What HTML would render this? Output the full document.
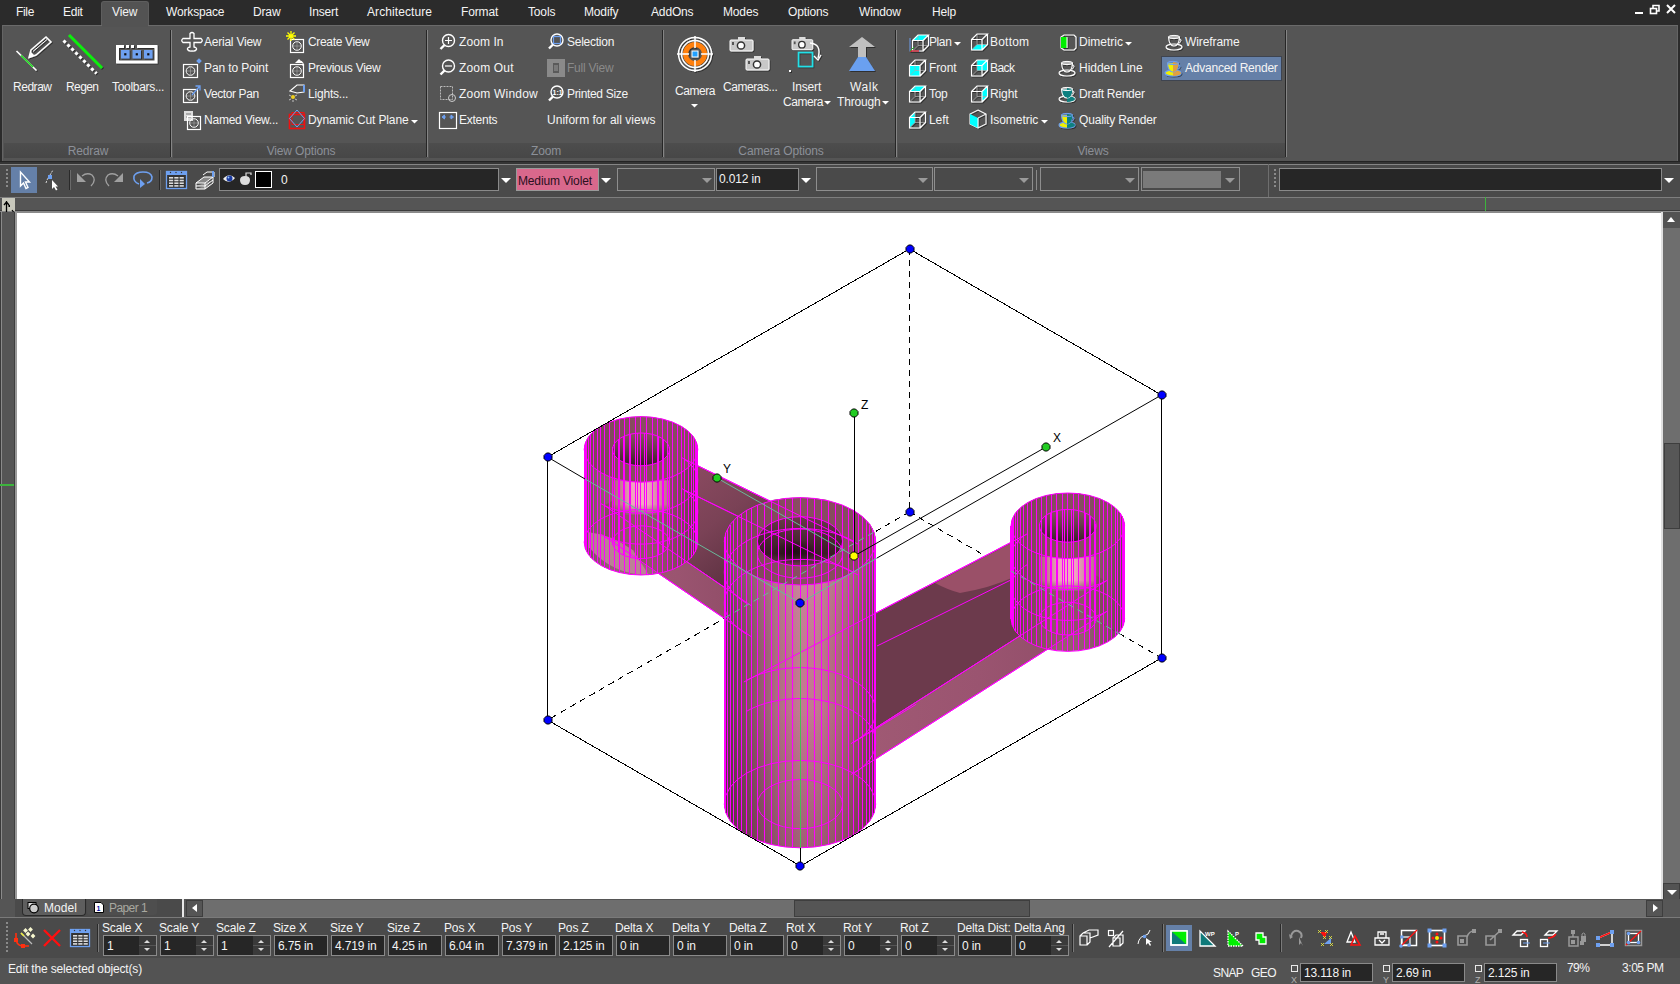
<!DOCTYPE html><html><head><meta charset="utf-8"><style>
*{margin:0;padding:0;box-sizing:border-box}
html,body{width:1680px;height:984px;overflow:hidden;background:#535353}
body{position:relative;font-family:"Liberation Sans",sans-serif;font-size:12px;color:#f4f4f4}
.t{position:absolute;white-space:nowrap;line-height:14px;letter-spacing:-0.15px}
.r{position:absolute}
svg{position:absolute;left:0;top:0}
</style></head><body><div class="r" style="left:0px;top:0px;width:1680px;height:25px;background:#2b2b2b;"></div>
<div class="r" style="left:101px;top:1px;width:48px;height:25px;background:#535353;border-radius:3px 3px 0 0;border:1px solid #5e5e5e;border-bottom:none"></div>
<div class="t" style="left:16px;top:5px;letter-spacing:-0.33px;">File</div>
<div class="t" style="left:63px;top:5px;letter-spacing:-0.24px;">Edit</div>
<div class="t" style="left:112px;top:5px;letter-spacing:-0.10px;">View</div>
<div class="t" style="left:166px;top:5px;letter-spacing:-0.16px;">Workspace</div>
<div class="t" style="left:253px;top:5px;">Draw</div>
<div class="t" style="left:309px;top:5px;letter-spacing:-0.15px;">Insert</div>
<div class="t" style="left:367px;top:5px;letter-spacing:0.08px;">Architecture</div>
<div class="t" style="left:461px;top:5px;">Format</div>
<div class="t" style="left:528px;top:5px;">Tools</div>
<div class="t" style="left:584px;top:5px;">Modify</div>
<div class="t" style="left:651px;top:5px;">AddOns</div>
<div class="t" style="left:723px;top:5px;">Modes</div>
<div class="t" style="left:788px;top:5px;">Options</div>
<div class="t" style="left:859px;top:5px;">Window</div>
<div class="t" style="left:932px;top:5px;">Help</div>
<svg width="1680" height="25" style="left:0;top:0"><g stroke="#fff" stroke-width="2" fill="none"><line x1="1635" y1="13" x2="1643" y2="13"/><rect x="1650.5" y="8.5" width="6" height="5" stroke-width="1.6"/><path d="M1653 8 V5.5 H1659 V11 H1657" stroke-width="1.6"/><path d="M1667 5 L1675 13 M1675 5 L1667 13" stroke-width="2"/></g></svg>
<div class="r" style="left:2px;top:25px;width:1676px;height:136px;background:#555555;border:1px solid #646464;border-top-color:#6a6a6a;border-bottom:none"></div>
<div class="r" style="left:102px;top:24px;width:46px;height:3px;background:#535353;"></div>
<div class="r" style="left:0px;top:25px;width:2px;height:137px;background:#2b2b2b;"></div>
<div class="r" style="left:1678px;top:25px;width:2px;height:137px;background:#2b2b2b;"></div>
<div class="r" style="left:4px;top:143px;width:166px;height:15px;background:linear-gradient(#4d4d4d,#474747);"></div>
<div class="r" style="left:173px;top:143px;width:253px;height:15px;background:linear-gradient(#4d4d4d,#474747);"></div>
<div class="r" style="left:429px;top:143px;width:233px;height:15px;background:linear-gradient(#4d4d4d,#474747);"></div>
<div class="r" style="left:665px;top:143px;width:230px;height:15px;background:linear-gradient(#4d4d4d,#474747);"></div>
<div class="r" style="left:898px;top:143px;width:387px;height:15px;background:linear-gradient(#4d4d4d,#474747);"></div>
<div class="r" style="left:170px;top:30px;width:1px;height:127px;background:#262626;"></div>
<div class="r" style="left:171px;top:30px;width:1px;height:127px;background:#858585;"></div>
<div class="r" style="left:426px;top:30px;width:1px;height:127px;background:#262626;"></div>
<div class="r" style="left:427px;top:30px;width:1px;height:127px;background:#858585;"></div>
<div class="r" style="left:662px;top:30px;width:1px;height:127px;background:#262626;"></div>
<div class="r" style="left:663px;top:30px;width:1px;height:127px;background:#858585;"></div>
<div class="r" style="left:895px;top:30px;width:1px;height:127px;background:#262626;"></div>
<div class="r" style="left:896px;top:30px;width:1px;height:127px;background:#858585;"></div>
<div class="r" style="left:1285px;top:30px;width:1px;height:127px;background:#262626;"></div>
<div class="r" style="left:1286px;top:30px;width:1px;height:127px;background:#858585;"></div>
<div class="t" style="left:-12px;width:200px;text-align:center;top:144px;color:#8c9098">Redraw</div>
<div class="t" style="left:201px;width:200px;text-align:center;top:144px;color:#8c9098">View Options</div>
<div class="t" style="left:446px;width:200px;text-align:center;top:144px;color:#8c9098">Zoom</div>
<div class="t" style="left:681px;width:200px;text-align:center;top:144px;color:#8c9098">Camera Options</div>
<div class="t" style="left:993px;width:200px;text-align:center;top:144px;color:#8c9098">Views</div>
<div class="r" style="left:1161px;top:56px;width:121px;height:25px;background:#6580a8;border:1px solid #3e4450"></div>
<div class="t" style="left:13px;top:80px;letter-spacing:-0.47px;">Redraw</div>
<div class="t" style="left:66px;top:80px;letter-spacing:-0.60px;">Regen</div>
<div class="t" style="left:112px;top:80px;letter-spacing:-0.30px;">Toolbars...</div>
<div class="t" style="left:204px;top:35px;letter-spacing:-0.23px;">Aerial View</div>
<div class="t" style="left:204px;top:61px;letter-spacing:-0.10px;">Pan to Point</div>
<div class="t" style="left:204px;top:87px;letter-spacing:-0.40px;">Vector Pan</div>
<div class="t" style="left:204px;top:113px;letter-spacing:-0.23px;">Named View...</div>
<div class="t" style="left:308px;top:35px;letter-spacing:-0.34px;">Create View</div>
<div class="t" style="left:308px;top:61px;letter-spacing:-0.26px;">Previous View</div>
<div class="t" style="left:308px;top:87px;letter-spacing:-0.20px;">Lights...</div>
<div class="t" style="left:308px;top:113px;letter-spacing:-0.13px;">Dynamic Cut Plane</div>
<div class="t" style="left:459px;top:35px;letter-spacing:0.08px;">Zoom In</div>
<div class="t" style="left:459px;top:61px;letter-spacing:0.16px;">Zoom Out</div>
<div class="t" style="left:459px;top:87px;letter-spacing:0.20px;">Zoom Window</div>
<div class="t" style="left:459px;top:113px;letter-spacing:-0.25px;">Extents</div>
<div class="t" style="left:567px;top:35px;letter-spacing:-0.25px;">Selection</div>
<div class="t" style="left:567px;top:87px;letter-spacing:-0.33px;">Printed Size</div>
<div class="t" style="left:547px;top:113px;letter-spacing:0.02px;">Uniform for all views</div>
<div class="t" style="left:675px;top:84px;letter-spacing:-0.45px;">Camera</div>
<div class="t" style="left:723px;top:80px;letter-spacing:-0.44px;">Cameras...</div>
<div class="t" style="left:792px;top:80px;letter-spacing:-0.15px;">Insert</div>
<div class="t" style="left:783px;top:95px;letter-spacing:-0.45px;">Camera</div>
<div class="t" style="left:850px;top:80px;letter-spacing:0.60px;">Walk</div>
<div class="t" style="left:837px;top:95px;letter-spacing:-0.16px;">Through</div>
<div class="t" style="left:929px;top:35px;letter-spacing:-0.40px;">Plan</div>
<div class="t" style="left:929px;top:61px;letter-spacing:-0.12px;">Front</div>
<div class="t" style="left:929px;top:87px;letter-spacing:-0.32px;">Top</div>
<div class="t" style="left:929px;top:113px;letter-spacing:-0.10px;">Left</div>
<div class="t" style="left:990px;top:35px;letter-spacing:0.21px;">Bottom</div>
<div class="t" style="left:990px;top:61px;letter-spacing:-0.57px;">Back</div>
<div class="t" style="left:990px;top:87px;letter-spacing:-0.12px;">Right</div>
<div class="t" style="left:990px;top:113px;letter-spacing:-0.05px;">Isometric</div>
<div class="t" style="left:1079px;top:35px;letter-spacing:0.00px;">Dimetric</div>
<div class="t" style="left:1079px;top:61px;letter-spacing:-0.04px;">Hidden Line</div>
<div class="t" style="left:1079px;top:87px;letter-spacing:-0.25px;">Draft Render</div>
<div class="t" style="left:1079px;top:113px;letter-spacing:-0.18px;">Quality Render</div>
<div class="t" style="left:1185px;top:35px;letter-spacing:-0.09px;">Wireframe</div>
<div class="t" style="left:567px;top:61px;letter-spacing:-0.23px;color:#8a8a8a;">Full View</div>
<div class="t" style="left:1185px;top:61px;letter-spacing:-0.23px;">Advanced Render</div>
<div class="r" style="left:0px;top:161px;width:1680px;height:1px;background:#242424;"></div>
<div class="r" style="left:0px;top:162px;width:1680px;height:2px;background:#353535;"></div>
<div class="r" style="left:0px;top:164px;width:1680px;height:1px;background:#858585;"></div>
<div class="r" style="left:0px;top:165px;width:1680px;height:32px;background:#4a4a4a;"></div>
<div class="r" style="left:0px;top:197px;width:1680px;height:1px;background:#7e7e7e;"></div>
<div class="r" style="left:0px;top:198px;width:1680px;height:12px;background:#555555;"></div>
<div class="r" style="left:0px;top:210px;width:1680px;height:1px;background:#3c3c3c;"></div>
<div class="r" style="left:0px;top:211px;width:1680px;height:2px;background:#8a8a8a;"></div>
<div class="r" style="left:6px;top:169px;width:2px;height:2px;background:#8a8a8a;"></div>
<div class="r" style="left:6px;top:173px;width:2px;height:2px;background:#8a8a8a;"></div>
<div class="r" style="left:6px;top:177px;width:2px;height:2px;background:#8a8a8a;"></div>
<div class="r" style="left:6px;top:181px;width:2px;height:2px;background:#8a8a8a;"></div>
<div class="r" style="left:6px;top:185px;width:2px;height:2px;background:#8a8a8a;"></div>
<div class="r" style="left:11px;top:167px;width:26px;height:26px;background:#6580a8;"></div>
<div class="r" style="left:69px;top:170px;width:1px;height:20px;background:#7a7a7a;"></div>
<div class="r" style="left:159px;top:170px;width:1px;height:20px;background:#7a7a7a;"></div>
<div class="r" style="left:219px;top:168px;width:280px;height:23px;background:#262626;border:1px solid #8a8a8a"></div>
<div class="r" style="left:255px;top:171px;width:17px;height:17px;background:#000;border:1.5px solid #fff"></div>
<div class="t" style="left:281px;top:173px;">0</div>
<div class="r" style="left:501px;top:178px;width:0;height:0;border-left:5px solid transparent;border-right:5px solid transparent;border-top:5px solid #fff"></div>
<div class="r" style="left:516px;top:168px;width:83px;height:23px;background:#d9688c;border:1px solid #9a9a9a"></div>
<div class="t" style="left:518px;top:174px;color:#2a1020;">Medium Violet</div>
<div class="r" style="left:601px;top:178px;width:0;height:0;border-left:5px solid transparent;border-right:5px solid transparent;border-top:5px solid #fff"></div>
<div class="r" style="left:617px;top:168px;width:98px;height:23px;background:#4a4a4a;border:1px solid #8e8e8e"></div>
<div class="r" style="left:702px;top:178px;width:0;height:0;border-left:5px solid transparent;border-right:5px solid transparent;border-top:5px solid #9a9a9a"></div>
<div class="r" style="left:716px;top:168px;width:83px;height:23px;background:#262626;border:1px solid #8a8a8a"></div>
<div class="t" style="left:719px;top:172px;">0.012 in</div>
<div class="r" style="left:801px;top:178px;width:0;height:0;border-left:5px solid transparent;border-right:5px solid transparent;border-top:5px solid #fff"></div>
<div class="r" style="left:816px;top:167px;width:117px;height:24px;background:#4a4a4a;border:1px solid #8e8e8e"></div>
<div class="r" style="left:918px;top:178px;width:0;height:0;border-left:5px solid transparent;border-right:5px solid transparent;border-top:5px solid #9a9a9a"></div>
<div class="r" style="left:934px;top:167px;width:99px;height:24px;background:#4a4a4a;border:1px solid #8e8e8e"></div>
<div class="r" style="left:1019px;top:178px;width:0;height:0;border-left:5px solid transparent;border-right:5px solid transparent;border-top:5px solid #9a9a9a"></div>
<div class="r" style="left:1036px;top:170px;width:1px;height:20px;background:#8a8a8a;"></div>
<div class="r" style="left:1040px;top:167px;width:99px;height:24px;background:#4a4a4a;border:1px solid #8e8e8e"></div>
<div class="r" style="left:1125px;top:178px;width:0;height:0;border-left:5px solid transparent;border-right:5px solid transparent;border-top:5px solid #9a9a9a"></div>
<div class="r" style="left:1141px;top:167px;width:99px;height:24px;background:#4a4a4a;border:1px solid #8e8e8e"></div>
<div class="r" style="left:1143px;top:171px;width:78px;height:17px;background:#7a7a7a;"></div>
<div class="r" style="left:1225px;top:178px;width:0;height:0;border-left:5px solid transparent;border-right:5px solid transparent;border-top:5px solid #9a9a9a"></div>
<div class="r" style="left:1268px;top:164px;width:1px;height:33px;background:#6e6e6e;"></div>
<div class="r" style="left:1274px;top:169px;width:2px;height:2px;background:#8a8a8a;"></div>
<div class="r" style="left:1274px;top:173px;width:2px;height:2px;background:#8a8a8a;"></div>
<div class="r" style="left:1274px;top:177px;width:2px;height:2px;background:#8a8a8a;"></div>
<div class="r" style="left:1274px;top:181px;width:2px;height:2px;background:#8a8a8a;"></div>
<div class="r" style="left:1274px;top:185px;width:2px;height:2px;background:#8a8a8a;"></div>
<div class="r" style="left:1279px;top:168px;width:383px;height:23px;background:#262626;border:1px solid #8a8a8a"></div>
<div class="r" style="left:1664px;top:178px;width:0;height:0;border-left:5px solid transparent;border-right:5px solid transparent;border-top:5px solid #fff"></div>
<div class="r" style="left:2px;top:198px;width:13px;height:13px;background:#c8c8bc;"></div>
<svg width="20" height="20" style="left:0;top:196px"><path d="M6.5,5 V17 M4,9 L6.5,6 L9,9" stroke="#000" stroke-width="1.3" fill="none"/><rect x="8.5" y="9" width="1.5" height="2" fill="#000"/><path d="M12,14 L13.5,16" stroke="#000" stroke-width="1.2"/></svg>
<div class="r" style="left:1485px;top:197px;width:1px;height:14px;background:#3cb43c;"></div>
<div class="r" style="left:0px;top:212px;width:16px;height:687px;background:#555555;"></div>
<div class="r" style="left:0px;top:212px;width:1px;height:687px;background:#3a3a3a;"></div>
<div class="r" style="left:1px;top:212px;width:1px;height:687px;background:#8a8a8a;"></div>
<div class="r" style="left:14px;top:212px;width:1px;height:687px;background:#3e3e3e;"></div>
<div class="r" style="left:15px;top:212px;width:2px;height:687px;background:#999;"></div>
<div class="r" style="left:0px;top:484px;width:14px;height:2px;background:#3cb43c;"></div>
<div class="r" style="left:17px;top:213px;width:1645px;height:686px;background:#ffffff;"></div>
<div class="r" style="left:1661px;top:212px;width:2px;height:688px;background:#e0e0e0;"></div>
<div class="r" style="left:1663px;top:212px;width:17px;height:672px;background:#6e6e6e;"></div>
<div class="r" style="left:1663px;top:212px;width:17px;height:16px;background:#535353;"></div>
<div class="r" style="left:1667px;top:217px;width:0;height:0;border-left:4.5px solid transparent;border-right:4.5px solid transparent;border-bottom:5px solid #fff"></div>
<div class="r" style="left:1664px;top:443px;width:16px;height:86px;background:#575757;border:1px solid #3e3e3e"></div>
<div class="r" style="left:1663px;top:883px;width:17px;height:17px;background:#535353;border:1px solid #3e3e3e"></div>
<div class="r" style="left:1667px;top:890px;width:0;height:0;border-left:5px solid transparent;border-right:5px solid transparent;border-top:5px solid #fff"></div>
<div class="r" style="left:0px;top:899px;width:1680px;height:18px;background:#555555;"></div>
<div class="r" style="left:15px;top:899px;width:167px;height:18px;background:#4a4a4a;"></div>
<div class="r" style="left:22px;top:899px;width:64px;height:17px;background:#5e5e5e;border-radius:0 0 4px 4px;border:1px solid #2a2a2a;border-top:none"></div>
<div class="t" style="left:44px;top:901px;letter-spacing:0.06px;">Model</div>
<div class="r" style="left:87px;top:899px;width:70px;height:16px;background:#4e4e4e;border-radius:0 0 3px 3px"></div>
<div class="t" style="left:109px;top:901px;letter-spacing:-0.58px;color:#a8a8a0;">Paper 1</div>
<svg width="120" height="20" style="left:0;top:898px"><rect x="28" y="4.5" width="8" height="6" fill="#ddd" stroke="#000" stroke-width="1"/><circle cx="34" cy="10.5" r="4.3" fill="#ccc" stroke="#000" stroke-width="1.2"/><path d="M94.5,4.5 H101 L103.5,7 V14.5 H94.5 Z" fill="#fff" stroke="#000" stroke-width="1"/><text x="96.5" y="13" font-family="Liberation Sans" font-size="7" font-weight="bold" fill="#0010a0">1</text></svg>
<div class="r" style="left:182px;top:899px;width:2px;height:18px;background:#e8e8e8;"></div>
<div class="r" style="left:186px;top:900px;width:17px;height:17px;background:#555;border:1px solid #3e3e3e"></div>
<div class="r" style="left:192px;top:904px;width:0;height:0;border-top:4.5px solid transparent;border-bottom:4.5px solid transparent;border-right:5px solid #fff"></div>
<div class="r" style="left:203px;top:900px;width:1443px;height:17px;background:#6e6e6e;"></div>
<div class="r" style="left:794px;top:900px;width:236px;height:17px;background:#555555;border:1px solid #3e3e3e"></div>
<div class="r" style="left:1646px;top:900px;width:17px;height:17px;background:#555;border:1px solid #3e3e3e"></div>
<div class="r" style="left:1653px;top:904px;width:0;height:0;border-top:4.5px solid transparent;border-bottom:4.5px solid transparent;border-left:5px solid #fff"></div>
<div class="r" style="left:1663px;top:900px;width:17px;height:17px;background:#575757;"></div>
<div class="r" style="left:0px;top:917px;width:1680px;height:1px;background:#7a7a7a;"></div>
<div class="r" style="left:0px;top:918px;width:1680px;height:40px;background:#4a4a4a;"></div>
<div class="r" style="left:6px;top:922px;width:2px;height:2px;background:#8a8a8a;"></div>
<div class="r" style="left:6px;top:926px;width:2px;height:2px;background:#8a8a8a;"></div>
<div class="r" style="left:6px;top:930px;width:2px;height:2px;background:#8a8a8a;"></div>
<div class="r" style="left:6px;top:934px;width:2px;height:2px;background:#8a8a8a;"></div>
<div class="r" style="left:6px;top:938px;width:2px;height:2px;background:#8a8a8a;"></div>
<div class="r" style="left:6px;top:942px;width:2px;height:2px;background:#8a8a8a;"></div>
<div class="r" style="left:6px;top:946px;width:2px;height:2px;background:#8a8a8a;"></div>
<div class="r" style="left:6px;top:950px;width:2px;height:2px;background:#8a8a8a;"></div>
<div class="r" style="left:97px;top:925px;width:1px;height:27px;background:#7a7a7a;"></div>
<div class="t" style="left:102px;top:921px;width:56px;overflow:hidden">Scale X</div>
<div class="r" style="left:103px;top:935px;width:54px;height:21px;background:#262626;border:1px solid #8a8a8a"></div>
<div class="t" style="left:107px;top:939px;">1</div>
<div class="r" style="left:139px;top:936px;width:17px;height:19px;background:#3a3a3a;"></div>
<div class="r" style="left:139px;top:945px;width:17px;height:1px;background:#555;"></div>
<div class="r" style="left:144px;top:940px;width:0;height:0;border-left:3px solid transparent;border-right:3px solid transparent;border-bottom:3px solid #ddd"></div>
<div class="r" style="left:144px;top:948px;width:0;height:0;border-left:3px solid transparent;border-right:3px solid transparent;border-top:3px solid #ddd"></div>
<div class="t" style="left:159px;top:921px;width:56px;overflow:hidden">Scale Y</div>
<div class="r" style="left:160px;top:935px;width:54px;height:21px;background:#262626;border:1px solid #8a8a8a"></div>
<div class="t" style="left:164px;top:939px;">1</div>
<div class="r" style="left:196px;top:936px;width:17px;height:19px;background:#3a3a3a;"></div>
<div class="r" style="left:196px;top:945px;width:17px;height:1px;background:#555;"></div>
<div class="r" style="left:201px;top:940px;width:0;height:0;border-left:3px solid transparent;border-right:3px solid transparent;border-bottom:3px solid #ddd"></div>
<div class="r" style="left:201px;top:948px;width:0;height:0;border-left:3px solid transparent;border-right:3px solid transparent;border-top:3px solid #ddd"></div>
<div class="t" style="left:216px;top:921px;width:56px;overflow:hidden">Scale Z</div>
<div class="r" style="left:217px;top:935px;width:54px;height:21px;background:#262626;border:1px solid #8a8a8a"></div>
<div class="t" style="left:221px;top:939px;">1</div>
<div class="r" style="left:253px;top:936px;width:17px;height:19px;background:#3a3a3a;"></div>
<div class="r" style="left:253px;top:945px;width:17px;height:1px;background:#555;"></div>
<div class="r" style="left:258px;top:940px;width:0;height:0;border-left:3px solid transparent;border-right:3px solid transparent;border-bottom:3px solid #ddd"></div>
<div class="r" style="left:258px;top:948px;width:0;height:0;border-left:3px solid transparent;border-right:3px solid transparent;border-top:3px solid #ddd"></div>
<div class="t" style="left:273px;top:921px;width:56px;overflow:hidden">Size X</div>
<div class="r" style="left:274px;top:935px;width:54px;height:21px;background:#262626;border:1px solid #8a8a8a"></div>
<div class="t" style="left:278px;top:939px;">6.75 in</div>
<div class="t" style="left:330px;top:921px;width:56px;overflow:hidden">Size Y</div>
<div class="r" style="left:331px;top:935px;width:54px;height:21px;background:#262626;border:1px solid #8a8a8a"></div>
<div class="t" style="left:335px;top:939px;">4.719 in</div>
<div class="t" style="left:387px;top:921px;width:56px;overflow:hidden">Size Z</div>
<div class="r" style="left:388px;top:935px;width:54px;height:21px;background:#262626;border:1px solid #8a8a8a"></div>
<div class="t" style="left:392px;top:939px;">4.25 in</div>
<div class="t" style="left:444px;top:921px;width:56px;overflow:hidden">Pos X</div>
<div class="r" style="left:445px;top:935px;width:54px;height:21px;background:#262626;border:1px solid #8a8a8a"></div>
<div class="t" style="left:449px;top:939px;">6.04 in</div>
<div class="t" style="left:501px;top:921px;width:56px;overflow:hidden">Pos Y</div>
<div class="r" style="left:502px;top:935px;width:54px;height:21px;background:#262626;border:1px solid #8a8a8a"></div>
<div class="t" style="left:506px;top:939px;">7.379 in</div>
<div class="t" style="left:558px;top:921px;width:56px;overflow:hidden">Pos Z</div>
<div class="r" style="left:559px;top:935px;width:54px;height:21px;background:#262626;border:1px solid #8a8a8a"></div>
<div class="t" style="left:563px;top:939px;">2.125 in</div>
<div class="t" style="left:615px;top:921px;width:56px;overflow:hidden">Delta X</div>
<div class="r" style="left:616px;top:935px;width:54px;height:21px;background:#262626;border:1px solid #8a8a8a"></div>
<div class="t" style="left:620px;top:939px;">0 in</div>
<div class="t" style="left:672px;top:921px;width:56px;overflow:hidden">Delta Y</div>
<div class="r" style="left:673px;top:935px;width:54px;height:21px;background:#262626;border:1px solid #8a8a8a"></div>
<div class="t" style="left:677px;top:939px;">0 in</div>
<div class="t" style="left:729px;top:921px;width:56px;overflow:hidden">Delta Z</div>
<div class="r" style="left:730px;top:935px;width:54px;height:21px;background:#262626;border:1px solid #8a8a8a"></div>
<div class="t" style="left:734px;top:939px;">0 in</div>
<div class="t" style="left:786px;top:921px;width:56px;overflow:hidden">Rot X</div>
<div class="r" style="left:787px;top:935px;width:54px;height:21px;background:#262626;border:1px solid #8a8a8a"></div>
<div class="t" style="left:791px;top:939px;">0</div>
<div class="r" style="left:823px;top:936px;width:17px;height:19px;background:#3a3a3a;"></div>
<div class="r" style="left:823px;top:945px;width:17px;height:1px;background:#555;"></div>
<div class="r" style="left:828px;top:940px;width:0;height:0;border-left:3px solid transparent;border-right:3px solid transparent;border-bottom:3px solid #ddd"></div>
<div class="r" style="left:828px;top:948px;width:0;height:0;border-left:3px solid transparent;border-right:3px solid transparent;border-top:3px solid #ddd"></div>
<div class="t" style="left:843px;top:921px;width:56px;overflow:hidden">Rot Y</div>
<div class="r" style="left:844px;top:935px;width:54px;height:21px;background:#262626;border:1px solid #8a8a8a"></div>
<div class="t" style="left:848px;top:939px;">0</div>
<div class="r" style="left:880px;top:936px;width:17px;height:19px;background:#3a3a3a;"></div>
<div class="r" style="left:880px;top:945px;width:17px;height:1px;background:#555;"></div>
<div class="r" style="left:885px;top:940px;width:0;height:0;border-left:3px solid transparent;border-right:3px solid transparent;border-bottom:3px solid #ddd"></div>
<div class="r" style="left:885px;top:948px;width:0;height:0;border-left:3px solid transparent;border-right:3px solid transparent;border-top:3px solid #ddd"></div>
<div class="t" style="left:900px;top:921px;width:56px;overflow:hidden">Rot Z</div>
<div class="r" style="left:901px;top:935px;width:54px;height:21px;background:#262626;border:1px solid #8a8a8a"></div>
<div class="t" style="left:905px;top:939px;">0</div>
<div class="r" style="left:937px;top:936px;width:17px;height:19px;background:#3a3a3a;"></div>
<div class="r" style="left:937px;top:945px;width:17px;height:1px;background:#555;"></div>
<div class="r" style="left:942px;top:940px;width:0;height:0;border-left:3px solid transparent;border-right:3px solid transparent;border-bottom:3px solid #ddd"></div>
<div class="r" style="left:942px;top:948px;width:0;height:0;border-left:3px solid transparent;border-right:3px solid transparent;border-top:3px solid #ddd"></div>
<div class="t" style="left:957px;top:921px;width:56px;overflow:hidden">Delta Dist:</div>
<div class="r" style="left:958px;top:935px;width:54px;height:21px;background:#262626;border:1px solid #8a8a8a"></div>
<div class="t" style="left:962px;top:939px;">0 in</div>
<div class="t" style="left:1014px;top:921px;width:56px;overflow:hidden">Delta Ang</div>
<div class="r" style="left:1015px;top:935px;width:54px;height:21px;background:#262626;border:1px solid #8a8a8a"></div>
<div class="t" style="left:1019px;top:939px;">0</div>
<div class="r" style="left:1051px;top:936px;width:17px;height:19px;background:#3a3a3a;"></div>
<div class="r" style="left:1051px;top:945px;width:17px;height:1px;background:#555;"></div>
<div class="r" style="left:1056px;top:940px;width:0;height:0;border-left:3px solid transparent;border-right:3px solid transparent;border-bottom:3px solid #ddd"></div>
<div class="r" style="left:1056px;top:948px;width:0;height:0;border-left:3px solid transparent;border-right:3px solid transparent;border-top:3px solid #ddd"></div>
<div class="r" style="left:1072px;top:925px;width:1px;height:27px;background:#7a7a7a;"></div>
<div class="r" style="left:1162px;top:925px;width:1px;height:27px;background:#7a7a7a;"></div>
<div class="r" style="left:1166px;top:925px;width:26px;height:26px;background:#6580a8;"></div>
<div class="r" style="left:1280px;top:925px;width:1px;height:27px;background:#7a7a7a;"></div>
<div class="r" style="left:0px;top:958px;width:1680px;height:26px;background:#535353;"></div>
<div class="t" style="left:8px;top:962px;letter-spacing:-0.15px;">Edit the selected object(s)</div>
<div class="t" style="left:1213px;top:966px;letter-spacing:-0.60px;">SNAP</div>
<div class="t" style="left:1251px;top:966px;letter-spacing:-0.60px;">GEO</div>
<div class="r" style="left:1291px;top:965px;width:7px;height:7px;background:none;border:1.5px solid #e8e8e8"></div>
<div class="t" style="left:1291px;top:973px;color:#b0b0b0;font-size:9px;">X</div>
<div class="r" style="left:1300px;top:963px;width:73px;height:19px;background:#262626;border:1px solid #8a8a8a"></div>
<div class="t" style="left:1304px;top:966px;">13.118 in</div>
<div class="r" style="left:1383px;top:965px;width:7px;height:7px;background:none;border:1.5px solid #e8e8e8"></div>
<div class="t" style="left:1383px;top:973px;color:#b0b0b0;font-size:9px;">Y</div>
<div class="r" style="left:1392px;top:963px;width:73px;height:19px;background:#262626;border:1px solid #8a8a8a"></div>
<div class="t" style="left:1396px;top:966px;">2.69 in</div>
<div class="r" style="left:1475px;top:965px;width:7px;height:7px;background:none;border:1.5px solid #e8e8e8"></div>
<div class="t" style="left:1475px;top:973px;color:#b0b0b0;font-size:9px;">Z</div>
<div class="r" style="left:1484px;top:963px;width:73px;height:19px;background:#262626;border:1px solid #8a8a8a"></div>
<div class="t" style="left:1488px;top:966px;">2.125 in</div>
<div class="t" style="left:1567px;top:961px;letter-spacing:-0.60px;">79%</div>
<div class="t" style="left:1622px;top:961px;letter-spacing:-0.44px;">3:05 PM</div><svg width="1680" height="984" style="left:0;top:0">
<defs>
<linearGradient id="gc" x1="0" x2="1" y1="0" y2="0">
 <stop offset="0" stop-color="#5a3c44"/><stop offset="0.08" stop-color="#704654"/><stop offset="0.2" stop-color="#8c5468"/>
 <stop offset="0.36" stop-color="#b06e84"/><stop offset="0.5" stop-color="#c47a92"/><stop offset="0.62" stop-color="#c27890"/>
 <stop offset="0.8" stop-color="#a86078"/><stop offset="0.92" stop-color="#844c5c"/><stop offset="1" stop-color="#5e3c46"/>
</linearGradient>
<linearGradient id="gctop" x1="0" x2="0" y1="0" y2="1">
 <stop offset="0" stop-color="#ffffff" stop-opacity="0.2"/><stop offset="0.3" stop-color="#ffffff" stop-opacity="0.05"/><stop offset="0.45" stop-color="#ffffff" stop-opacity="0"/>
 <stop offset="0.6" stop-color="#200010" stop-opacity="0"/><stop offset="1" stop-color="#200010" stop-opacity="0.22"/>
</linearGradient>
<linearGradient id="gb" x1="0" x2="1" y1="0" y2="0">
 <stop offset="0" stop-color="#5e4040"/><stop offset="0.12" stop-color="#7a4a58"/><stop offset="0.4" stop-color="#925668"/>
 <stop offset="0.65" stop-color="#8e5268"/><stop offset="0.88" stop-color="#7a4458"/><stop offset="1" stop-color="#5e3a44"/>
</linearGradient>
<linearGradient id="gpink" x1="0" x2="1" y1="0" y2="0">
 <stop offset="0" stop-color="#a86078"/><stop offset="0.35" stop-color="#f0a2c0"/><stop offset="0.6" stop-color="#f4a8c4"/><stop offset="1" stop-color="#b86a88"/>
</linearGradient>
<linearGradient id="gpinkv" x1="0" x2="0" y1="0" y2="1">
 <stop offset="0" stop-color="#000" stop-opacity="0"/><stop offset="0.7" stop-color="#000" stop-opacity="0"/><stop offset="1" stop-color="#000" stop-opacity="0.35"/>
</linearGradient>
<linearGradient id="ghole" x1="0" x2="0" y1="0" y2="1">
 <stop offset="0" stop-color="#6a3a4a"/><stop offset="0.4" stop-color="#4e2a36"/><stop offset="0.75" stop-color="#3a1c26"/><stop offset="1" stop-color="#6a3a4c"/>
</linearGradient>
<linearGradient id="gholeb" x1="0" x2="0" y1="0" y2="1">
 <stop offset="0" stop-color="#8a5062"/><stop offset="0.45" stop-color="#6a3c4c"/><stop offset="1" stop-color="#3a1c28"/>
</linearGradient>
<radialGradient id="gwedge" cx="0.5" cy="0.5" r="0.5">
 <stop offset="0" stop-color="#1a0a10" stop-opacity="0.85"/><stop offset="1" stop-color="#1a0a10" stop-opacity="0"/>
</radialGradient>
<linearGradient id="gtop" x1="0" x2="1" y1="0" y2="0">
 <stop offset="0" stop-color="#7a4656"/><stop offset="0.5" stop-color="#8a4c62"/><stop offset="1" stop-color="#844a5e"/>
</linearGradient>
<linearGradient id="glarm" gradientUnits="userSpaceOnUse" x1="690" y1="470" x2="760" y2="560">
 <stop offset="0" stop-color="#8a4a60"/><stop offset="0.5" stop-color="#7a4256"/><stop offset="1" stop-color="#5e3242"/>
</linearGradient>
<linearGradient id="garmf" x1="0" x2="1" y1="0" y2="0">
 <stop offset="0" stop-color="#a05a74"/><stop offset="0.5" stop-color="#9a5470"/><stop offset="1" stop-color="#8e4c66"/>
</linearGradient>
</defs>
<g stroke="#000" stroke-width="1" stroke-dasharray="6,5" fill="none" shape-rendering="crispEdges"><line x1="909.5" y1="249.0" x2="909.5" y2="512.0" stroke="#000" stroke-width="1" /><line x1="909.5" y1="512.0" x2="547.5" y2="720.0" stroke="#000" stroke-width="1" /><line x1="909.5" y1="512.0" x2="1161.5" y2="658.0" stroke="#000" stroke-width="1" /></g>
<polygon points="743.8,682.0 1025.7,534.7 1105.9,581.0 850.8,743.8" fill="#6c3a4c" />
<polygon points="850.8,743.8 1105.9,581.0 1105.9,612.0 850.8,774.7" fill="url(#garmf)" />
<path d="M935,583 L1011,543 L1014,577 Q990,588 960,593 Q948,590 935,583 Z" fill="#9a5068"/>
<line x1="743.8" y1="682.0" x2="1025.7" y2="534.7" stroke="#ff00ff" stroke-width="1" />
<line x1="850.8" y1="743.8" x2="1105.9" y2="581.0" stroke="#ff00ff" stroke-width="1" />
<line x1="850.8" y1="774.7" x2="1105.9" y2="612.0" stroke="#ff00ff" stroke-width="1" />
<line x1="877.0" y1="646.0" x2="1021.0" y2="575.0" stroke="#ff00ff" stroke-width="1" />
<path d="M1011.0,525.8 L1011.0,618.6 A56.8,32.8 0 0 0 1124.6,618.6 L1124.6,525.8 A56.8,32.8 0 0 0 1011.0,525.8 Z" fill="url(#gb)" opacity="0.95"/>
<rect x="1039.4" y="556.6" width="56.8" height="34" fill="url(#gpink)"/>
<rect x="1039.4" y="556.6" width="56.8" height="34" fill="url(#gpinkv)"/>
<ellipse cx="1067.8" cy="525.8" rx="56.8" ry="32.8" fill="url(#gtop)" />
<ellipse cx="1067.8" cy="525.8" rx="28.4" ry="16.4" fill="url(#gholeb)" />
<path d="M1124.5,525.8V618.6M1124.5,522.6V621.8M1123.5,519.4V625.0M1122.5,516.3V628.1M1120.5,513.2V631.1M1117.5,510.3V634.0M1115.5,507.6V636.8M1111.5,505.0V639.4M1107.5,502.6V641.8M1103.5,500.4V643.9M1099.5,498.5V645.8M1094.5,496.9V647.5M1089.5,495.5V648.9M1084.5,494.4V650.0M1078.5,493.6V650.7M1073.5,493.1V651.2M1067.5,493.0V651.4M1062.5,493.1V651.2M1056.5,493.6V650.7M1051.5,494.4V650.0M1046.5,495.5V648.9M1041.5,496.9V647.5M1036.5,498.5V645.8M1031.5,500.4V643.9M1027.5,502.6V641.8M1023.5,505.0V639.4M1020.5,507.6V636.8M1017.5,510.3V634.0M1015.5,513.2V631.1M1013.5,516.3V628.1M1012.5,519.4V625.0M1011.5,522.6V621.8M1010.5,525.8V618.6" stroke="#ff00ff" stroke-width="1" fill="none" shape-rendering="crispEdges"/>
<path d="M1095.5,523.8V620.6M1094.5,519.6V624.7M1090.5,515.9V628.4M1085.5,512.9V631.5M1078.5,510.7V633.7M1071.5,509.5V634.8M1064.5,509.5V634.8M1057.5,510.6V633.8M1050.5,512.7V631.7M1045.5,515.7V628.7M1041.5,519.4V625.0M1039.5,523.5V620.8" stroke="#ff00ff" stroke-width="1" fill="none" shape-rendering="crispEdges"/>
<ellipse cx="1067.8" cy="525.8" rx="56.8" ry="32.8" fill="none" stroke="#ff00ff" stroke-width="1" />
<ellipse cx="1067.8" cy="618.6" rx="56.8" ry="32.8" fill="none" stroke="#ff00ff" stroke-width="1" />
<ellipse cx="1067.8" cy="525.8" rx="28.4" ry="16.4" fill="none" stroke="#ff00ff" stroke-width="1" />
<ellipse cx="1067.8" cy="618.6" rx="28.4" ry="16.4" fill="none" stroke="#ff00ff" stroke-width="1" />
<polyline points="1027.6,533.5 1024.6,535.4 1021.8,537.4 1019.4,539.6 1017.2,541.8 1015.3,544.2 1013.8,546.6 1012.6,549.1 1011.7,551.6 1011.2,554.1 1011.0,556.7 1011.2,559.3 1011.7,561.8 1012.6,564.4 1013.8,566.9 1015.3,569.3 1017.2,571.6 1019.4,573.9 1021.8,576.0 1024.6,578.0 1027.6,579.9 1030.9,581.7 1034.4,583.3 1038.1,584.7 1042.0,585.9 1046.1,587.0 1050.2,587.9 1054.5,588.6 1058.9,589.1 1063.3,589.4 1067.8,589.5 1072.3,589.4 1076.7,589.1 1081.1,588.6 1085.4,587.9 1089.5,587.0 1093.6,585.9 1097.5,584.7 1101.2,583.3 1104.7,581.7 1108.0,579.9" fill="none" stroke="#ff00ff" stroke-width="1"/>
<polyline points="1027.6,564.4 1024.6,566.3 1021.8,568.4 1019.4,570.5 1017.2,572.7 1015.3,575.1 1013.8,577.5 1012.6,580.0 1011.7,582.5 1011.2,585.1 1011.0,587.6 1011.2,590.2 1011.7,592.8 1012.6,595.3 1013.8,597.8 1015.3,600.2 1017.2,602.5 1019.4,604.8 1021.8,606.9 1024.6,608.9 1027.6,610.8 1030.9,612.6 1034.4,614.2 1038.1,615.6 1042.0,616.9 1046.1,617.9 1050.2,618.8 1054.5,619.5 1058.9,620.0 1063.3,620.3 1067.8,620.4 1072.3,620.3 1076.7,620.0 1081.1,619.5 1085.4,618.8 1089.5,617.9 1093.6,616.9 1097.5,615.6 1101.2,614.2 1104.7,612.6 1108.0,610.8" fill="none" stroke="#ff00ff" stroke-width="1"/>
<polygon points="857.9,544.0 684.4,459.2 604.3,505.4 751.1,605.6" fill="url(#glarm)" />
<polygon points="751.1,605.6 604.3,505.4 604.3,536.4 751.1,636.6" fill="url(#garmf)" />
<line x1="857.9" y1="544.0" x2="684.4" y2="459.2" stroke="#ff00ff" stroke-width="1" />
<line x1="751.1" y1="605.6" x2="604.3" y2="505.4" stroke="#ff00ff" stroke-width="1" />
<line x1="751.1" y1="636.6" x2="604.3" y2="536.4" stroke="#ff00ff" stroke-width="1" />
<path d="M584.2,449.4 L584.2,542.2 A56.8,32.8 0 0 0 697.8,542.2 L697.8,449.4 A56.8,32.8 0 0 0 584.2,449.4 Z" fill="url(#gb)" opacity="0.9"/>
<path d="M589.0,547.2 Q611.0,574.2 649.0,575.2 L633.0,550.2 Q611.0,534.2 589.0,532.2 Z" fill="#c88aa2" opacity="0.75"/>
<rect x="612.6" y="480.3" width="56.8" height="34" fill="url(#gpink)"/>
<rect x="612.6" y="480.3" width="56.8" height="34" fill="url(#gpinkv)"/>
<ellipse cx="641.0" cy="449.4" rx="56.8" ry="32.8" fill="url(#gtop)" />
<ellipse cx="641.0" cy="449.4" rx="28.4" ry="16.4" fill="url(#gholeb)" />
<path d="M697.5,449.4V542.2M697.5,446.2V545.4M696.5,443.0V548.6M695.5,439.9V551.7M693.5,436.9V554.8M691.5,434.0V557.7M688.5,431.2V560.4M684.5,428.6V563.0M681.5,426.2V565.4M677.5,424.1V567.6M672.5,422.2V569.5M667.5,420.5V571.2M662.5,419.1V572.5M657.5,418.1V573.6M652.5,417.3V574.4M646.5,416.8V574.9M640.5,416.6V575.0M635.5,416.8V574.9M629.5,417.3V574.4M624.5,418.1V573.6M619.5,419.1V572.5M614.5,420.5V571.2M609.5,422.2V569.5M604.5,424.1V567.6M600.5,426.2V565.4M597.5,428.6V563.0M593.5,431.2V560.4M590.5,434.0V557.7M588.5,436.9V554.8M586.5,439.9V551.7M585.5,443.0V548.6M584.5,446.2V545.4M584.5,449.4V542.2" stroke="#ff00ff" stroke-width="1" fill="none" shape-rendering="crispEdges"/>
<path d="M669.5,447.4V544.2M667.5,443.3V548.4M663.5,439.6V552.1M658.5,436.5V555.1M652.5,434.3V557.3M644.5,433.2V558.5M637.5,433.2V558.5M630.5,434.2V557.4M623.5,436.3V555.3M618.5,439.3V552.3M614.5,443.0V548.6M612.5,447.2V544.5" stroke="#ff00ff" stroke-width="1" fill="none" shape-rendering="crispEdges"/>
<ellipse cx="641.0" cy="449.4" rx="56.8" ry="32.8" fill="none" stroke="#ff00ff" stroke-width="1" />
<ellipse cx="641.0" cy="542.2" rx="56.8" ry="32.8" fill="none" stroke="#ff00ff" stroke-width="1" />
<ellipse cx="641.0" cy="449.4" rx="28.4" ry="16.4" fill="none" stroke="#ff00ff" stroke-width="1" />
<ellipse cx="641.0" cy="542.2" rx="28.4" ry="16.4" fill="none" stroke="#ff00ff" stroke-width="1" />
<polyline points="600.8,503.6 604.1,505.3 607.6,506.9 611.3,508.3 615.2,509.6 619.2,510.7 623.4,511.6 627.7,512.3 632.1,512.8 636.5,513.1 641.0,513.2 645.4,513.1 649.9,512.8 654.2,512.3 658.5,511.6 662.7,510.7 666.8,509.6 670.7,508.3 674.4,506.9 677.9,505.3 681.2,503.6 684.2,501.7 686.9,499.7 689.4,497.5 691.6,495.3 693.5,492.9 695.0,490.5 696.2,488.0 697.1,485.5 697.6,482.9 697.8,480.4 697.6,477.8 697.1,475.2 696.2,472.7 695.0,470.2 693.5,467.8 691.6,465.5 689.4,463.2 686.9,461.1 684.2,459.1 681.2,457.2" fill="none" stroke="#ff00ff" stroke-width="1"/>
<polyline points="600.8,534.5 604.1,536.2 607.6,537.8 611.3,539.3 615.2,540.5 619.2,541.6 623.4,542.5 627.7,543.2 632.1,543.7 636.5,544.0 641.0,544.1 645.4,544.0 649.9,543.7 654.2,543.2 658.5,542.5 662.7,541.6 666.8,540.5 670.7,539.3 674.4,537.8 677.9,536.2 681.2,534.5 684.2,532.6 686.9,530.6 689.4,528.4 691.6,526.2 693.5,523.9 695.0,521.4 696.2,519.0 697.1,516.4 697.6,513.9 697.8,511.3 697.6,508.7 697.1,506.2 696.2,503.6 695.0,501.2 693.5,498.7 691.6,496.4 689.4,494.2 686.9,492.0 684.2,490.0 681.2,488.1" fill="none" stroke="#ff00ff" stroke-width="1"/>
<line x1="857.9" y1="574.9" x2="684.4" y2="490.1" stroke="#ff00ff" stroke-width="1" />
<path d="M724.3,541.3 L724.3,804.1 A75.7,43.7 0 0 0 875.7,804.1 L875.7,541.3 A75.7,43.7 0 0 0 724.3,541.3 Z" fill="url(#gc)" />
<path d="M724.3,541.3 L724.3,804.1 A75.7,43.7 0 0 0 875.7,804.1 L875.7,541.3 A75.7,43.7 0 0 0 724.3,541.3 Z" fill="url(#gctop)" />
<ellipse cx="800.0" cy="541.3" rx="75.7" ry="43.7" fill="url(#gtop)" />
<ellipse cx="800.0" cy="541.3" rx="42.6" ry="24.6" fill="url(#ghole)" />
<ellipse cx="795.0" cy="551.3" rx="22.0" ry="12.0" fill="url(#gwedge)" />
<path d="M875.5,541.3V804.1M875.5,537.0V808.4M874.5,532.7V812.7M872.5,528.6V816.8M869.5,524.5V820.9M866.5,520.7V824.8M862.5,517.0V828.4M858.5,513.5V831.9M853.5,510.3V835.1M848.5,507.5V838.0M842.5,504.9V840.5M835.5,502.7V842.7M828.5,500.9V844.6M821.5,499.4V846.0M814.5,498.4V847.0M807.5,497.7V847.7M800.5,497.5V847.9M792.5,497.7V847.7M785.5,498.4V847.0M778.5,499.4V846.0M771.5,500.9V844.6M764.5,502.7V842.7M757.5,504.9V840.5M751.5,507.5V838.0M746.5,510.3V835.1M741.5,513.5V831.9M737.5,517.0V828.4M733.5,520.7V824.8M730.5,524.5V820.9M727.5,528.6V816.8M725.5,532.7V812.7M724.5,537.0V808.4M724.5,541.3V804.1" stroke="#ff00ff" stroke-width="1" fill="none" shape-rendering="crispEdges"/>
<ellipse cx="800.0" cy="541.3" rx="75.7" ry="43.7" fill="none" stroke="#ff00ff" stroke-width="1" />
<ellipse cx="800.0" cy="804.1" rx="75.7" ry="43.7" fill="none" stroke="#ff00ff" stroke-width="1" />
<ellipse cx="800.0" cy="541.3" rx="42.6" ry="24.6" fill="none" stroke="#ff00ff" stroke-width="1" />
<ellipse cx="800.0" cy="804.1" rx="42.6" ry="24.6" fill="none" stroke="#ff00ff" stroke-width="1" />
<polyline points="830.1,536.2 825.0,533.7 819.3,531.7 813.2,530.2 806.7,529.3 800.0,529.0 793.3,529.3 786.8,530.2 780.7,531.7 775.0,533.7 769.9,536.2 765.5,539.2 762.0,542.5 759.5,546.0 757.9,549.8 757.4,553.6 757.9,557.5 759.5,561.3 762.0,564.8 765.5,568.1 769.9,571.0 775.0,573.6 780.7,575.6 786.8,577.0 793.3,577.9 800.0,578.3 806.7,577.9 813.2,577.0 819.3,575.6 825.0,573.6 830.1,571.0 834.5,568.1 838.0,564.8 840.5,561.3 842.1,557.5 842.6,553.6 842.1,549.8 840.5,546.0 838.0,542.5 834.5,539.2 830.1,536.2" fill="none" stroke="#ff00ff" stroke-width="1"/>
<polyline points="853.6,742.3 857.6,739.8 861.3,737.1 864.6,734.2 867.5,731.2 870.0,728.1 872.0,724.9 873.7,721.6 874.8,718.2 875.5,714.8 875.7,711.4 875.5,707.9 874.8,704.5 873.7,701.2 872.0,697.8 870.0,694.6 867.5,691.5 864.6,688.5 861.3,685.7 857.6,683.0 853.6,680.4 849.2,678.1 844.5,676.0 839.6,674.1 834.4,672.4 829.0,671.0 823.4,669.8 817.7,668.8 811.8,668.2 805.9,667.8 800.0,667.6 794.1,667.8 788.2,668.2 782.3,668.8 776.6,669.8 771.0,671.0 765.6,672.4 760.4,674.1 755.5,676.0 750.8,678.1 746.4,680.4" fill="none" stroke="#ff00ff" stroke-width="1"/>
<polyline points="853.6,773.2 857.6,770.7 861.3,768.0 864.6,765.1 867.5,762.1 870.0,759.0 872.0,755.8 873.7,752.5 874.8,749.1 875.5,745.7 875.7,742.3 875.5,738.9 874.8,735.4 873.7,732.1 872.0,728.8 870.0,725.6 867.5,722.4 864.6,719.4 861.3,716.6 857.6,713.9 853.6,711.4 849.2,709.0 844.5,706.9 839.6,705.0 834.4,703.3 829.0,701.9 823.4,700.7 817.7,699.8 811.8,699.1 805.9,698.7 800.0,698.5 794.1,698.7 788.2,699.1 782.3,699.8 776.6,700.7 771.0,701.9 765.6,703.3 760.4,705.0 755.5,706.9 750.8,709.0 746.4,711.4" fill="none" stroke="#ff00ff" stroke-width="1"/>
<polyline points="853.6,541.3 849.2,538.9 844.5,536.8 839.6,534.9 834.4,533.2 829.0,531.8 823.4,530.6 817.7,529.7 811.8,529.0 805.9,528.6 800.0,528.5 794.1,528.6 788.2,529.0 782.3,529.7 776.6,530.6 771.0,531.8 765.6,533.2 760.4,534.9 755.5,536.8 750.8,538.9 746.4,541.3 742.4,543.8 738.7,546.5 735.4,549.3 732.5,552.3 730.0,555.5 728.0,558.7 726.3,562.0 725.2,565.4 724.5,568.8 724.3,572.2 724.5,575.6 725.2,579.0 726.3,582.4 728.0,585.7 730.0,588.9 732.5,592.1 735.4,595.1 738.7,597.9 742.4,600.6 746.4,603.1" fill="none" stroke="#ff00ff" stroke-width="1"/>
<polyline points="853.6,572.2 849.2,569.9 844.5,567.7 839.6,565.8 834.4,564.2 829.0,562.7 823.4,561.5 817.7,560.6 811.8,559.9 805.9,559.5 800.0,559.4 794.1,559.5 788.2,559.9 782.3,560.6 776.6,561.5 771.0,562.7 765.6,564.2 760.4,565.8 755.5,567.7 750.8,569.9 746.4,572.2 742.4,574.7 738.7,577.4 735.4,580.3 732.5,583.3 730.0,586.4 728.0,589.6 726.3,592.9 725.2,596.3 724.5,599.7 724.3,603.1 724.5,606.6 725.2,610.0 726.3,613.3 728.0,616.6 730.0,619.9 732.5,623.0 735.4,626.0 738.7,628.8 742.4,631.5 746.4,634.1" fill="none" stroke="#ff00ff" stroke-width="1"/>
<line x1="853.6" y1="742.3" x2="916.2" y2="704.3" stroke="#ff00ff" stroke-width="1" />
<line x1="743.8" y1="682.0" x2="1025.7" y2="534.7" stroke="#ff00ff" stroke-width="1" />
<line x1="850.8" y1="743.8" x2="1105.9" y2="581.0" stroke="#ff00ff" stroke-width="1" />
<line x1="850.8" y1="774.7" x2="1105.9" y2="612.0" stroke="#ff00ff" stroke-width="1" />
<line x1="857.9" y1="544.0" x2="684.4" y2="459.2" stroke="#ff00ff" stroke-width="1" />
<line x1="751.1" y1="605.6" x2="604.3" y2="505.4" stroke="#ff00ff" stroke-width="1" />
<line x1="751.1" y1="636.6" x2="604.3" y2="536.4" stroke="#ff00ff" stroke-width="1" />
<line x1="857.9" y1="574.9" x2="684.4" y2="490.1" stroke="#ff00ff" stroke-width="1" />
<g stroke="#6ab89a" stroke-width="1" stroke-dasharray="6,5" fill="none"><line x1="725.0" y1="617.7" x2="877.0" y2="530.4" stroke="#6ab89a" stroke-width="1" /><line x1="1011.0" y1="571.0" x2="1126.0" y2="637.7" stroke="#6ab89a" stroke-width="1" /></g>
<g stroke="#000" stroke-width="1" fill="none" shape-rendering="crispEdges"><line x1="909.5" y1="249.0" x2="1161.5" y2="395.0" stroke="#000" stroke-width="1" /><line x1="909.5" y1="249.0" x2="547.5" y2="457.0" stroke="#000" stroke-width="1" /><line x1="547.5" y1="457.0" x2="547.5" y2="720.0" stroke="#000" stroke-width="1" /><line x1="1161.5" y1="395.0" x2="1161.5" y2="658.0" stroke="#000" stroke-width="1" /><line x1="547.5" y1="720.0" x2="800.5" y2="866.0" stroke="#000" stroke-width="1" /><line x1="1161.5" y1="658.0" x2="800.5" y2="866.0" stroke="#000" stroke-width="1" /></g>
<line x1="547.5" y1="457.0" x2="585.0" y2="479.0" stroke="#000" stroke-width="1" />
<line x1="585.0" y1="479.0" x2="800.5" y2="603.0" stroke="#6ab89a" stroke-width="1" />
<line x1="800.5" y1="603.0" x2="877.0" y2="558.0" stroke="#6ab89a" stroke-width="1" />
<line x1="877.0" y1="558.0" x2="1161.5" y2="395.0" stroke="#000" stroke-width="1" />
<line x1="800.5" y1="603.0" x2="800.5" y2="848.0" stroke="#48c050" stroke-width="1" shape-rendering="crispEdges"/>
<line x1="800.5" y1="848.0" x2="800.5" y2="866.0" stroke="#000" stroke-width="1" shape-rendering="crispEdges"/>
<line x1="854.5" y1="413.0" x2="854.5" y2="556.0" stroke="#000" stroke-width="1" shape-rendering="crispEdges"/>
<line x1="717.0" y1="478.0" x2="854.0" y2="556.0" stroke="#6ab89a" stroke-width="1" />
<line x1="854.0" y1="556.0" x2="1046.0" y2="447.0" stroke="#000" stroke-width="1" />
<path d="M908.5,245 H911.5 L914,247.5 V250.5 L911.5,253 H908.5 L906,250.5 V247.5 Z" fill="#0000ff" stroke="#000" stroke-width="1"/>
<path d="M1160.5,391 H1163.5 L1166,393.5 V396.5 L1163.5,399 H1160.5 L1158,396.5 V393.5 Z" fill="#0000ff" stroke="#000" stroke-width="1"/>
<path d="M546.5,453 H549.5 L552,455.5 V458.5 L549.5,461 H546.5 L544,458.5 V455.5 Z" fill="#0000ff" stroke="#000" stroke-width="1"/>
<path d="M798.5,599 H801.5 L804,601.5 V604.5 L801.5,607 H798.5 L796,604.5 V601.5 Z" fill="#0000ff" stroke="#000" stroke-width="1"/>
<path d="M908.5,508 H911.5 L914,510.5 V513.5 L911.5,516 H908.5 L906,513.5 V510.5 Z" fill="#0000ff" stroke="#000" stroke-width="1"/>
<path d="M1160.5,654 H1163.5 L1166,656.5 V659.5 L1163.5,662 H1160.5 L1158,659.5 V656.5 Z" fill="#0000ff" stroke="#000" stroke-width="1"/>
<path d="M546.5,716 H549.5 L552,718.5 V721.5 L549.5,724 H546.5 L544,721.5 V718.5 Z" fill="#0000ff" stroke="#000" stroke-width="1"/>
<path d="M798.5,862 H801.5 L804,864.5 V867.5 L801.5,870 H798.5 L796,867.5 V864.5 Z" fill="#0000ff" stroke="#000" stroke-width="1"/>
<path d="M852.5,409 H855.5 L858,411.5 V414.5 L855.5,417 H852.5 L850,414.5 V411.5 Z" fill="#22cc22" stroke="#000" stroke-width="1"/>
<path d="M1044.5,443 H1047.5 L1050,445.5 V448.5 L1047.5,451 H1044.5 L1042,448.5 V445.5 Z" fill="#22cc22" stroke="#000" stroke-width="1"/>
<path d="M715.5,474 H718.5 L721,476.5 V479.5 L718.5,482 H715.5 L713,479.5 V476.5 Z" fill="#22cc22" stroke="#000" stroke-width="1"/>
<path d="M852.5,552 H855.5 L858,554.5 V557.5 L855.5,560 H852.5 L850,557.5 V554.5 Z" fill="#ffff00" stroke="#000" stroke-width="1"/>
<text x="861" y="409" font-family="Liberation Sans" font-size="12" fill="#000">Z</text>
<text x="1053" y="442" font-family="Liberation Sans" font-size="12" fill="#000">X</text>
<text x="723" y="473" font-family="Liberation Sans" font-size="12" fill="#000">Y</text>
</svg><svg width="1680" height="984" style="left:0;top:0;pointer-events:none">
<defs><filter id="sh" x="-20%" y="-20%" width="150%" height="150%"><feDropShadow dx="1" dy="1" stdDeviation="0.6" flood-color="#000" flood-opacity="0.45"/></filter></defs>
<g filter="url(#sh)">
<line x1="16.5" y1="51" x2="36.5" y2="70.5" stroke="#fff" stroke-width="1.6"/>
<line x1="21" y1="55.5" x2="33" y2="67" stroke="#22dd22" stroke-width="1.6"/>
<path d="M29,57.5 L31,50 L46,37 L51,42 L36,55 Z" fill="none" stroke="#fff" stroke-width="1.5"/>
<path d="M33,51.5 L47,39.5" stroke="#fff" stroke-width="1"/>
<path d="M29,57.5 L31,52 L34.5,55.5 Z" fill="#fff"/>
<line x1="69" y1="35" x2="102" y2="68" stroke="#11ee11" stroke-width="3"/>
<line x1="63.5" y1="40.5" x2="96.5" y2="73.5" stroke="#fff" stroke-width="3" stroke-dasharray="3,2.6"/>
<path d="M124,46.5 H117.5 V62 H156 V46.5 H137" fill="none" stroke="#fff" stroke-width="3"/>
<rect x="126" y="45" width="3" height="3" fill="#fff"/><rect x="131" y="45" width="3" height="3" fill="#fff"/>
<rect x="121" y="50" width="8.5" height="8.5" fill="#6ea0f0"/><rect x="124.2" y="53.2" width="2.2" height="2.2" fill="#111"/>
<rect x="132.5" y="50" width="8.5" height="8.5" fill="#6ea0f0"/><rect x="135.7" y="53.2" width="2.2" height="2.2" fill="#111"/>
<rect x="144" y="50" width="8.5" height="8.5" fill="#6ea0f0"/><rect x="147.2" y="53.2" width="2.2" height="2.2" fill="#111"/>
</g>
<path d="M190,33.5 Q192,31.5 194,33.5 V38.5 H201 Q203.5,40.5 201,42.5 H194 V47 Q197,47.5 196.5,49.5 Q195,51.5 192,51 Q189,51.5 187.5,49.5 Q187,47.5 190,47 V42.5 H183 Q180.5,40.5 183,38.5 H190 Z" fill="none" stroke="#fff" stroke-width="1.3"/>
<rect x="183.5" y="64.5" width="14" height="13" fill="none" stroke="#fff" stroke-width="1.2"/><circle cx="190.5" cy="71.0" r="4.3" fill="none" stroke="#fff" stroke-width="1"/><path d="M190.5,66 V76 M185.5,71.0 H195.5" stroke="#aaa" stroke-width="0.6"/>
<rect x="197" y="59" width="4" height="4" fill="#6ea0f0" transform="rotate(45 199 61)"/>
<rect x="183.5" y="89.5" width="14" height="13" fill="none" stroke="#fff" stroke-width="1.2"/><circle cx="190.5" cy="96.0" r="4.3" fill="none" stroke="#fff" stroke-width="1"/><path d="M190.5,91 V101 M185.5,96.0 H195.5" stroke="#aaa" stroke-width="0.6"/>
<path d="M192,95 L199.5,86.5 M195.5,86 H200 V90.5" stroke="#6ea0f0" stroke-width="1.3" fill="none"/>
<rect x="184" y="111" width="9" height="10" fill="#ddd"/><path d="M186,114 H191 M186,117 H191" stroke="#777" stroke-width="1.2"/>
<rect x="187.5" y="116.5" width="13" height="13" fill="none" stroke="#fff" stroke-width="1.2"/><circle cx="194.0" cy="123.0" r="4.3" fill="none" stroke="#fff" stroke-width="1"/><path d="M194.0,118 V128 M189.5,123.0 H198.5" stroke="#aaa" stroke-width="0.6"/>
<rect x="290.5" y="39.5" width="13" height="13" fill="none" stroke="#fff" stroke-width="1.2"/><circle cx="297.0" cy="46.0" r="4.3" fill="none" stroke="#fff" stroke-width="1"/><path d="M297.0,41 V51 M292.5,46.0 H301.5" stroke="#aaa" stroke-width="0.6"/>
<path d="M291,31 V41 M286,36 H296 M287.5,32.5 L294.5,39.5 M294.5,32.5 L287.5,39.5" stroke="#ffff00" stroke-width="1.3"/>
<rect x="290.5" y="64.5" width="13" height="13" fill="none" stroke="#fff" stroke-width="1.2"/><circle cx="297.0" cy="71.0" r="4.3" fill="none" stroke="#fff" stroke-width="1"/><path d="M297.0,66 V76 M292.5,71.0 H301.5" stroke="#aaa" stroke-width="0.6"/>
<path d="M295,63 L299,59 L303,63 Z" fill="#fff"/><path d="M301,61 Q304,62 303,66" stroke="#fff" fill="none"/>
<path d="M290,91 L297,85 H304 V92 L297,93 Z" fill="none" stroke="#fff" stroke-width="1.1"/><rect x="303" y="85" width="2" height="7" fill="#6ea0f0"/>
<circle cx="293" cy="97" r="2" fill="#f0d020"/><path d="M289,95 L291,96 M297,95 L295,96 M289,100 L291,99 M297,100 L295,99 M293,100 V102" stroke="#ddd" stroke-width="0.8"/>
<rect x="289.5" y="114.5" width="15" height="14" fill="none" stroke="#ee1111" stroke-width="1.6"/><rect x="292" y="112.5" width="12" height="12" fill="none" stroke="#ee1111" stroke-width="1"/>
<path d="M297,110 L304.5,118.5 L297,127 L289.5,118.5 Z" fill="none" stroke="#6ea0f0" stroke-width="1"/>
<circle cx="448.5" cy="40.5" r="6" fill="none" stroke="#fff" stroke-width="1.4"/><line x1="444.5" y1="45.0" x2="440.5" y2="49.0" stroke="#fff" stroke-width="2.4"/><path d="M448.5,37 V44 M445,40.5 H452" stroke="#fff" stroke-width="1.2"/>
<circle cx="448.5" cy="66" r="6" fill="none" stroke="#fff" stroke-width="1.4"/><line x1="444.5" y1="70.5" x2="440.5" y2="74.5" stroke="#fff" stroke-width="2.4"/><path d="M445,66 H452" stroke="#fff" stroke-width="1.2"/>
<rect x="440.5" y="86.5" width="12" height="13" fill="none" stroke="#bbb" stroke-width="1" stroke-dasharray="2,1"/><circle cx="452" cy="98" r="3.5" fill="none" stroke="#ccc" stroke-width="1"/>
<rect x="439.5" y="112.5" width="17" height="16" fill="none" stroke="#fff" stroke-width="1.2"/><path d="M442,117 L444.5,115 V119 Z M453.5,117 L451,115 V119 Z M444,117 H446 M449.5,117 H451.5" fill="#6ea0f0" stroke="#6ea0f0"/>
<circle cx="557" cy="40" r="6" fill="none" stroke="#fff" stroke-width="1.4"/><line x1="553" y1="44.5" x2="549" y2="48.5" stroke="#fff" stroke-width="2.4"/><rect x="553.5" y="36.5" width="7" height="7" fill="none" stroke="#6ea0f0" stroke-width="1.2"/>
<rect x="547" y="59" width="18" height="18" fill="#8a8a8a"/><rect x="553" y="63" width="6" height="10" fill="#5a5a5a"/><path d="M554,66 H558 M554,68 H558 M554,70 H558" stroke="#aaa" stroke-width="0.8"/>
<circle cx="557" cy="92" r="6" fill="none" stroke="#fff" stroke-width="1.4"/><line x1="553" y1="96.5" x2="549" y2="100.5" stroke="#fff" stroke-width="2.4"/><text x="552.5" y="95" font-family="Liberation Sans" font-size="7" font-weight="bold" fill="#fff">1:1</text>
<g filter="url(#sh)">
<circle cx="695" cy="54" r="16.5" fill="none" stroke="#fff" stroke-width="1.5"/><circle cx="695" cy="54" r="13.5" fill="none" stroke="#fff" stroke-width="1.5"/>
<circle cx="695" cy="54" r="9.5" fill="none" stroke="#ff8010" stroke-width="5"/>
<path d="M695,36 V48 M695,60 V72 M677,54 H689 M701,54 H713" stroke="#fff" stroke-width="1.5"/>
<rect x="692" y="51" width="6" height="6" fill="#20a0ff" stroke="#fff" stroke-width="1"/>
<g transform="translate(730,37) scale(1)"><rect x="0" y="3" width="23" height="11" rx="1" fill="#c8c8c8" stroke="#fff" stroke-width="1"/><rect x="8" y="0" width="7" height="4" fill="#ddd"/><circle cx="11" cy="8.5" r="3.6" fill="#fff" stroke="#333" stroke-width="1.5"/><rect x="2" y="5" width="2" height="3" fill="#555"/></g>
<g transform="translate(746,56) scale(1)"><rect x="0" y="3" width="23" height="11" rx="1" fill="#c8c8c8" stroke="#fff" stroke-width="1"/><rect x="8" y="0" width="7" height="4" fill="#ddd"/><circle cx="11" cy="8.5" r="3.6" fill="#fff" stroke="#333" stroke-width="1.5"/><rect x="2" y="5" width="2" height="3" fill="#555"/></g>
<g transform="translate(792,37) scale(0.9)"><rect x="0" y="3" width="23" height="11" rx="1" fill="#c8c8c8" stroke="#fff" stroke-width="1"/><rect x="8" y="0" width="7" height="4" fill="#ddd"/><circle cx="11" cy="8.5" r="3.6" fill="#fff" stroke="#333" stroke-width="1.5"/><rect x="2" y="5" width="2" height="3" fill="#555"/></g>
<rect x="798.5" y="52.5" width="14" height="14" fill="none" stroke="#20e0e8" stroke-width="1.6"/>
<path d="M810,43 Q822,44 818,58" fill="none" stroke="#fff" stroke-width="1.4"/><path d="M814,56 L818,60 L821,55" fill="none" stroke="#fff" stroke-width="1.3"/><rect x="789" y="70" width="2" height="2" fill="#fff"/>
<path d="M862,37 L875,47 H866 V58 H858 V47 H849 Z" fill="#c0c0c0"/><path d="M858,57 H866 L875,71 H849 Z" fill="#6aa0f0"/>
</g>
<g filter="url(#sh)">
<path d="M912.5,40.5 L918.0,35.0 H928.5 L923.0,40.5 Z" fill="#00ffff"/><path d="M918.0,35.0 V45.5 H928.5 M918.0,45.5 L912.5,51.0" stroke="#aaa" stroke-width="0.7" fill="none"/><path d="M912.5,40.5 H923.0 V51.0 H912.5 Z M912.5,40.5 L918.0,35.0 H928.5 L923.0,40.5 M928.5,35.0 V45.5 L923.0,51.0" stroke="#fff" stroke-width="1.1" fill="none"/>
<path d="M910,38 V51 H920" stroke="#6a90d0" stroke-width="1.2" fill="none"/><path d="M910,51 H919" stroke="#e02020" stroke-width="1.3"/><path d="M910,51 L914,47" stroke="#20c020" stroke-width="1"/>
<rect x="909.5" y="65.5" width="10.5" height="10.5" fill="#00ffff"/><path d="M915.0,60.0 V70.5 H925.5 M915.0,70.5 L909.5,76.0" stroke="#aaa" stroke-width="0.7" fill="none"/><path d="M909.5,65.5 H920.0 V76.0 H909.5 Z M909.5,65.5 L915.0,60.0 H925.5 L920.0,65.5 M925.5,60.0 V70.5 L920.0,76.0" stroke="#fff" stroke-width="1.1" fill="none"/>
<path d="M909.5,91.5 L915.0,86.0 H925.5 L920.0,91.5 Z" fill="#00ffff"/><path d="M915.0,86.0 V96.5 H925.5 M915.0,96.5 L909.5,102.0" stroke="#aaa" stroke-width="0.7" fill="none"/><path d="M909.5,91.5 H920.0 V102.0 H909.5 Z M909.5,91.5 L915.0,86.0 H925.5 L920.0,91.5 M925.5,86.0 V96.5 L920.0,102.0" stroke="#fff" stroke-width="1.1" fill="none"/>
<path d="M909.5,117.5 L915.0,112.0 V122.5 L909.5,128.0 Z" fill="#00ffff"/><path d="M915.0,112.0 V122.5 H925.5 M915.0,122.5 L909.5,128.0" stroke="#aaa" stroke-width="0.7" fill="none"/><path d="M909.5,117.5 H920.0 V128.0 H909.5 Z M909.5,117.5 L915.0,112.0 H925.5 L920.0,117.5 M925.5,112.0 V122.5 L920.0,128.0" stroke="#fff" stroke-width="1.1" fill="none"/>
<path d="M971.5,50.0 L977.0,44.5 H987.5 L982.0,50.0 Z" fill="#00ffff"/><path d="M977.0,34.0 V44.5 H987.5 M977.0,44.5 L971.5,50.0" stroke="#aaa" stroke-width="0.7" fill="none"/><path d="M971.5,39.5 H982.0 V50.0 H971.5 Z M971.5,39.5 L977.0,34.0 H987.5 L982.0,39.5 M987.5,34.0 V44.5 L982.0,50.0" stroke="#fff" stroke-width="1.1" fill="none"/>
<rect x="977.0" y="60.0" width="10.5" height="10.5" fill="#00ffff"/><path d="M977.0,60.0 V70.5 H987.5 M977.0,70.5 L971.5,76.0" stroke="#aaa" stroke-width="0.7" fill="none"/><path d="M971.5,65.5 H982.0 V76.0 H971.5 Z M971.5,65.5 L977.0,60.0 H987.5 L982.0,65.5 M987.5,60.0 V70.5 L982.0,76.0" stroke="#fff" stroke-width="1.1" fill="none"/>
<path d="M982.0,91.5 L987.5,86.0 V96.5 L982.0,102.0 Z" fill="#00ffff"/><path d="M977.0,86.0 V96.5 H987.5 M977.0,96.5 L971.5,102.0" stroke="#aaa" stroke-width="0.7" fill="none"/><path d="M971.5,91.5 H982.0 V102.0 H971.5 Z M971.5,91.5 L977.0,86.0 H987.5 L982.0,91.5 M987.5,86.0 V96.5 L982.0,102.0" stroke="#fff" stroke-width="1.1" fill="none"/>
<path d="M978,110 L986,114 V124 L978,128 L970,124 V114 Z" fill="none" stroke="#fff" stroke-width="1.1"/><path d="M970,114 L978,118 V128 L970,124 Z" fill="#00ffff"/><path d="M978,118 L986,114 M978,118 V128" stroke="#fff" stroke-width="1"/>
<path d="M1061,37 L1064,35 H1074 L1076,37 V48 L1074,50 H1064 L1061,48 Z" fill="none" stroke="#fff" stroke-width="1.1"/><rect x="1061" y="37" width="6" height="11" fill="#00ee00"/><path d="M1067,37 V48" stroke="#fff"/>
<ellipse cx="1067" cy="73" rx="8" ry="3" fill="none" stroke="#fff" stroke-width="1.1"/><path d="M1061.5,63 Q1062,72 1067,72 Q1072,72 1072.5,63 Z" fill="none" stroke="#fff" stroke-width="1.1"/><ellipse cx="1067" cy="63" rx="5.5" ry="1.6" fill="none" stroke="#fff" stroke-width="1"/><path d="M1072,65 Q1076,65 1072,69.5" fill="none" stroke="#fff" stroke-width="1"/>
<ellipse cx="1067" cy="99" rx="8" ry="3" fill="none" stroke="#fff" stroke-width="1.1"/><path d="M1067,96 A8,3 0 0 1 1067,102 Z" fill="#0f8080"/><path d="M1061.5,89 Q1062,98 1067,98 Q1072,98 1072.5,89 Z" fill="#0f8080" stroke="#fff" stroke-width="1.1"/><path d="M1067,88 V98 Q1072,98 1072.5,89 Z" fill="#0f8080"/><ellipse cx="1067" cy="89" rx="5.5" ry="1.6" fill="none" stroke="#fff" stroke-width="1"/><path d="M1072,91 Q1076,91 1072,95.5" fill="none" stroke="#fff" stroke-width="1"/>
<ellipse cx="1067" cy="125" rx="8" ry="3" fill="#f0f000" stroke="#6ea0f0" stroke-width="1.1"/><path d="M1067,122 A8,3 0 0 1 1067,128 Z" fill="#0f8080"/><path d="M1061.5,115 Q1062,124 1067,124 Q1072,124 1072.5,115 Z" fill="#f0f000" stroke="#6ea0f0" stroke-width="1.1"/><path d="M1067,114 V124 Q1072,124 1072.5,115 Z" fill="#0f8080"/><ellipse cx="1067" cy="115" rx="5.5" ry="1.6" fill="none" stroke="#6ea0f0" stroke-width="1"/><path d="M1072,117 Q1076,117 1072,121.5" fill="none" stroke="#6ea0f0" stroke-width="1"/>
<ellipse cx="1174" cy="47" rx="8" ry="3" fill="none" stroke="#fff" stroke-width="1.1"/><path d="M1168.5,37 Q1169,46 1174,46 Q1179,46 1179.5,37 Z" fill="none" stroke="#fff" stroke-width="1.1"/><ellipse cx="1174" cy="37" rx="5.5" ry="1.6" fill="none" stroke="#fff" stroke-width="1"/><path d="M1179,39 Q1183,39 1179,43.5" fill="none" stroke="#fff" stroke-width="1"/>
<ellipse cx="1173" cy="73" rx="8" ry="3" fill="#f0f000" stroke="#6ea0f0" stroke-width="1.1"/><path d="M1173,70 A8,3 0 0 1 1173,76 Z" fill="#e0a040"/><path d="M1167.5,63 Q1168,72 1173,72 Q1178,72 1178.5,63 Z" fill="#f0f000" stroke="#6ea0f0" stroke-width="1.1"/><path d="M1173,62 V72 Q1178,72 1178.5,63 Z" fill="#e0a040"/><ellipse cx="1173" cy="63" rx="5.5" ry="1.6" fill="none" stroke="#6ea0f0" stroke-width="1"/><path d="M1178,65 Q1182,65 1178,69.5" fill="none" stroke="#6ea0f0" stroke-width="1"/>
</g>
<path d="M411,120 h7 l-3.5,3.5 Z" fill="#fff"/>
<path d="M954,42 h7 l-3.5,3.5 Z" fill="#fff"/>
<path d="M1041,120 h7 l-3.5,3.5 Z" fill="#fff"/>
<path d="M1125,42 h7 l-3.5,3.5 Z" fill="#fff"/>
<path d="M691,104 h7 l-3.5,3.5 Z" fill="#fff"/>
<path d="M824,101 h7 l-3.5,3.5 Z" fill="#fff"/>
<path d="M882,101 h7 l-3.5,3.5 Z" fill="#fff"/></svg><svg width="1680" height="984" style="left:0;top:0;pointer-events:none">
<path d="M20.5,172 V186 L23.5,183 L26,188.5 L28,187.5 L25.5,182 H29.5 Z" fill="none" stroke="#fff" stroke-width="1.4" stroke-linejoin="miter"/>
<path d="M46,183 Q48,177 50,175 L53,170" stroke="#ddd" stroke-width="1" fill="none" stroke-dasharray="2,1"/><rect x="48" y="175" width="4" height="4" fill="#6ea0f0"/>
<path d="M52,180 V189 L54,187 L56,190.5 L57.5,189.5 L55.5,186.5 H58 Z" fill="#fff"/>
<rect x="69" y="170" width="1" height="20" fill="#2a2a2a"/><rect x="70" y="170" width="1" height="20" fill="#6a6a6a"/>
<rect x="159" y="170" width="1" height="20" fill="#2a2a2a"/><rect x="160" y="170" width="1" height="20" fill="#6a6a6a"/>
<path d="M77,173 L86,182 H77 Z" fill="#a0a0a0"/><path d="M82,176 Q87,172 92,175 Q97,180 91,186" fill="none" stroke="#a0a0a0" stroke-width="1.3"/>
<path d="M123,173 L114,182 H123 Z" fill="#a0a0a0"/><path d="M118,176 Q113,172 108,175 Q103,180 109,186" fill="none" stroke="#a0a0a0" stroke-width="1.3"/>
<path d="M139,184 Q133,182 134,176 Q136,172 143,172 Q151,172 152,177 Q152,182 147,183" fill="none" stroke="#6ea0f0" stroke-width="1.6"/><path d="M140,179 L145,184 L140,188 Z" fill="#6ea0f0"/>
<rect x="166.5" y="171.5" width="20" height="17" fill="#333" stroke="#6ea0f0" stroke-width="1.3"/><rect x="166" y="171" width="21" height="4" fill="#6ea0f0"/><circle cx="170.5" cy="172.5" r="0.7" fill="#333"/><circle cx="176.0" cy="172.5" r="0.7" fill="#333"/><circle cx="181.5" cy="172.5" r="0.7" fill="#333"/><rect x="169.0" y="177.0" width="4.2" height="1.6" fill="#ddd"/><rect x="174.3" y="177.0" width="4.2" height="1.6" fill="#ddd"/><rect x="179.6" y="177.0" width="4.2" height="1.6" fill="#ddd"/><rect x="169.0" y="179.7" width="4.2" height="1.6" fill="#ddd"/><rect x="174.3" y="179.7" width="4.2" height="1.6" fill="#ddd"/><rect x="179.6" y="179.7" width="4.2" height="1.6" fill="#ddd"/><rect x="169.0" y="182.4" width="4.2" height="1.6" fill="#ddd"/><rect x="174.3" y="182.4" width="4.2" height="1.6" fill="#ddd"/><rect x="179.6" y="182.4" width="4.2" height="1.6" fill="#ddd"/><rect x="169.0" y="185.1" width="4.2" height="1.6" fill="#ddd"/><rect x="174.3" y="185.1" width="4.2" height="1.6" fill="#ddd"/><rect x="179.6" y="185.1" width="4.2" height="1.6" fill="#ddd"/>
<path d="M196,183 L204,177 H213 L205,183 Z M196,186 L205,186 L213,180 M196,189 H205 L213,183 M196,183 V189 M205,183 V189 M213,177 V183" fill="#888" stroke="#fff" stroke-width="1"/><path d="M203,175 L207,172 H214 V177" fill="none" stroke="#fff" stroke-width="1"/><rect x="212" y="171" width="2" height="6" fill="#6ea0f0"/>
<path d="M223,179 Q229,172 235,178 Q229,185 223,179 Z" fill="#eee"/><circle cx="229.5" cy="178.5" r="3" fill="#1a3aa0"/><circle cx="228.5" cy="177.5" r="0.9" fill="#9cf"/>
<path d="M240,180 Q240,176 245,176 Q250,176 250,180 Q250,185 245,185 Q240,185 240,180 Z" fill="#ddd"/><path d="M246,177 V173 H251 V175" fill="none" stroke="#ddd" stroke-width="1.2"/>
<path d="M16,933 V938 M16,938 Q16,945 22,946 H29" fill="none" stroke="#ff3010" stroke-width="1.6"/><rect x="14" y="938" width="4" height="4" fill="#ff3010"/><rect x="21" y="944" width="4" height="4" fill="#ff3010"/>
<path d="M21,933 L32,944" stroke="#bbb" stroke-width="1.2"/><path d="M21,933 L24,936" stroke="#f0f040" stroke-width="1.6"/>
<rect x="23.8" y="928.8" width="3.4" height="3.4" fill="#f8f8d0" transform="rotate(45 25.5 930.5)"/>
<rect x="28.8" y="927.8" width="3.4" height="3.4" fill="#f8f8d0" transform="rotate(45 30.5 929.5)"/>
<rect x="26.3" y="932.3" width="3.4" height="3.4" fill="#f8f8d0" transform="rotate(45 28 934)"/>
<rect x="31.3" y="934.3" width="3.4" height="3.4" fill="#f8f8d0" transform="rotate(45 33 936)"/>
<path d="M44,930 L60,946 M60,930 L44,946" stroke="#ff1010" stroke-width="2.4"/>
<rect x="70.5" y="929.5" width="19" height="17" fill="#333" stroke="#6ea0f0" stroke-width="1.3"/><rect x="70" y="929" width="20" height="4" fill="#6ea0f0"/><circle cx="74.5" cy="930.5" r="0.7" fill="#333"/><circle cx="80.0" cy="930.5" r="0.7" fill="#333"/><circle cx="85.5" cy="930.5" r="0.7" fill="#333"/><rect x="73.0" y="935.0" width="4.2" height="1.6" fill="#ddd"/><rect x="78.3" y="935.0" width="4.2" height="1.6" fill="#ddd"/><rect x="83.6" y="935.0" width="4.2" height="1.6" fill="#ddd"/><rect x="73.0" y="937.7" width="4.2" height="1.6" fill="#ddd"/><rect x="78.3" y="937.7" width="4.2" height="1.6" fill="#ddd"/><rect x="83.6" y="937.7" width="4.2" height="1.6" fill="#ddd"/><rect x="73.0" y="940.4" width="4.2" height="1.6" fill="#ddd"/><rect x="78.3" y="940.4" width="4.2" height="1.6" fill="#ddd"/><rect x="83.6" y="940.4" width="4.2" height="1.6" fill="#ddd"/><rect x="73.0" y="943.1" width="4.2" height="1.6" fill="#ddd"/><rect x="78.3" y="943.1" width="4.2" height="1.6" fill="#ddd"/><rect x="83.6" y="943.1" width="4.2" height="1.6" fill="#ddd"/>
<rect x="97" y="924" width="1" height="28" fill="#2a2a2a"/><rect x="98" y="924" width="1" height="28" fill="#7a7a7a"/>
<rect x="1072" y="924" width="1" height="28" fill="#2a2a2a"/><rect x="1073" y="924" width="1" height="28" fill="#7a7a7a"/>
<rect x="1162" y="924" width="1" height="28" fill="#2a2a2a"/><rect x="1163" y="924" width="1" height="28" fill="#7a7a7a"/>
<rect x="1280" y="924" width="1" height="28" fill="#2a2a2a"/><rect x="1281" y="924" width="1" height="28" fill="#7a7a7a"/>
<g fill="none" stroke="#fff" stroke-width="1.2">
<path d="M1080,936 H1087 V945 H1080 Z M1080,936 L1083,933 H1090 V942 L1087,945 M1083,933 L1089,930 H1098 V935 L1090,938"/>
<rect x="1108.5" y="930.5" width="5" height="5"/><path d="M1113,938 H1120 V946 H1113 Z M1113,938 L1116,935 H1123 V943 L1120,946 M1109,947 L1123,931" />
</g>
<path d="M1138,944 Q1139,937 1144,936 Q1149,935 1150,930" fill="none" stroke="#fff" stroke-width="1"/><circle cx="1144.5" cy="936.5" r="1.8" fill="#6ea0f0"/><path d="M1146,938 V945 L1148,943 L1150,946 L1151,945 L1149.5,942 H1152 Z" fill="#fff"/>
<rect x="1171" y="931" width="16" height="14" fill="#0f7a7a" stroke="#fff" stroke-width="1.5"/><path d="M1171,931 H1187 V945 Z" fill="#00ee00"/><rect x="1171" y="931" width="16" height="14" fill="none" stroke="#fff" stroke-width="1.5"/>
<path d="M1200,931 V946 H1215 Z" fill="#0f7a7a" stroke="#fff" stroke-width="1.3"/><text x="1205" y="936" font-family="Liberation Sans" font-size="6" font-weight="bold" fill="#fff">WP</text>
<path d="M1228,931 V946 H1243 Z" fill="#00ee00" stroke="#fff" stroke-width="1.3" stroke-dasharray="1.5,1"/><text x="1235" y="936" font-family="Liberation Sans" font-size="6" font-weight="bold" fill="#fff">P</text>
<path d="M1256,933 H1263 V937 H1266 V944 H1259 V940 H1256 Z" fill="#00ee00" stroke="#fff" stroke-width="1.3"/>
<path d="M1291,936 Q1293,930 1298,931 Q1303,933 1301,938" fill="none" stroke="#999" stroke-width="2"/><path d="M1289,934 L1293,937 L1290,939 Z" fill="#999"/><path d="M1299,937 V945 L1301,943 L1303,946 Z" fill="#999"/>
<path d="M1320,932 L1327,932 L1325,938 Z" fill="#ff1010"/><path d="M1331,938 L1331,944 L1324,944 Z" fill="#6ea0f0"/><path d="M1318,930 l3,3 m0,-3 l-3,3 M1325,930 l3,3 m0,-3 l-3,3 M1323,936 l3,3 m0,-3 l-3,3 M1329,936 l3,3 m0,-3 l-3,3 M1321,943 l3,3 m0,-3 l-3,3 M1330,943 l3,3 m0,-3 l-3,3" stroke="#f0f040" stroke-width="0.8"/>
<path d="M1347,942 L1351,932 L1355,942 Z" fill="none" stroke="#fff" stroke-width="1.3"/><path d="M1351,945 L1355,936 L1360,945 Z" fill="none" stroke="#ff1010" stroke-width="1.6"/>
<path d="M1375,938 H1389 V945 H1375 Z M1378,938 V932 H1386 V938 M1380,934 H1384 M1379,940 L1382,943 L1385,940" fill="none" stroke="#fff" stroke-width="1.3"/>
<rect x="1401.5" y="930.5" width="15" height="15" fill="none" stroke="#fff" stroke-width="1.5"/><rect x="1402" y="937" width="8" height="8" fill="none" stroke="#fff" stroke-width="1.2"/><path d="M1401,946 L1417,930" stroke="#ff1010" stroke-width="1.3"/><circle cx="1402" cy="937" r="1.8" fill="#6ea0f0"/><circle cx="1409" cy="945" r="1.8" fill="#6ea0f0"/><circle cx="1401" cy="946" r="1.8" fill="#6ea0f0"/>
<rect x="1429.5" y="930.5" width="15" height="15" fill="none" stroke="#fff" stroke-width="1.6"/><rect x="1427.5" y="928.5" width="4" height="4" fill="#6ea0f0"/><rect x="1442.5" y="928.5" width="4" height="4" fill="#6ea0f0"/><rect x="1427.5" y="943.5" width="4" height="4" fill="#6ea0f0"/><rect x="1442.5" y="943.5" width="4" height="4" fill="#6ea0f0"/><circle cx="1437" cy="938" r="2" fill="#ffee00"/><circle cx="1433" cy="938" r="1.5" fill="#ff1010"/><circle cx="1441" cy="938" r="1.5" fill="#ff1010"/><circle cx="1437" cy="934" r="1.5" fill="#ff1010"/><circle cx="1437" cy="942" r="1.5" fill="#ff1010"/>
<path d="M1458,936 H1467 V945 H1458 Z M1467,937 Q1469,931 1474,931" fill="none" stroke="#999" stroke-width="1.6"/><rect x="1460" y="939" width="4" height="4" fill="#999"/><rect x="1472" y="929" width="4" height="4" fill="#999"/>
<path d="M1486,936 H1495 V945 H1486 Z M1490,940 L1500,931" fill="none" stroke="#999" stroke-width="1.6"/><rect x="1498" y="929" width="4" height="4" fill="#999"/>
<path d="M1513,935 L1517,931 H1525 L1521,935 Z" fill="none" stroke="#fff" stroke-width="1.3"/><path d="M1522,932 Q1527,933 1527,937" fill="none" stroke="#ff1010" stroke-width="1.5"/><rect x="1520.5" y="939.5" width="7" height="7" fill="none" stroke="#fff" stroke-width="1.3"/><path d="M1523,943 H1530" stroke="#6ea0f0"/>
<path d="M1545,935 L1549,931 H1557 L1553,935 Z" fill="none" stroke="#fff" stroke-width="1.3"/><path d="M1548,938 Q1553,938 1556,934" fill="none" stroke="#ff1010" stroke-width="1.5"/><rect x="1540.5" y="939.5" width="7" height="7" fill="none" stroke="#fff" stroke-width="1.3"/><path d="M1543,943 H1550" stroke="#6ea0f0"/>
<path d="M1569,937 H1578 V946 H1569 Z M1573,932 V937" fill="none" stroke="#999" stroke-width="1.5"/><rect x="1571" y="930" width="4" height="4" fill="#999"/><rect x="1581" y="936" width="5" height="6" fill="#999"/><path d="M1582,936 V934 Q1583.5,932 1585,934 V936" fill="none" stroke="#999"/><rect x="1571" y="940" width="4" height="4" fill="#999"/><rect x="1580" y="941" width="4" height="4" fill="#999"/>
<path d="M1598,938 L1612,932 M1598,945 H1612 V932" fill="none" stroke="#fff" stroke-width="1.5"/><path d="M1598,938 L1612,932" stroke="#ff1010" stroke-width="1.5"/><rect x="1596" y="936" width="4" height="4" fill="#6ea0f0"/><rect x="1610" y="930" width="4" height="4" fill="#6ea0f0"/><rect x="1596" y="943" width="4" height="4" fill="#6ea0f0"/><rect x="1610" y="943" width="4" height="4" fill="#6ea0f0"/>
<rect x="1625.5" y="930.5" width="16" height="15" fill="none" stroke="#999" stroke-width="1.5"/><rect x="1628.5" y="933.5" width="10" height="9" fill="none" stroke="#fff" stroke-width="1.3"/><path d="M1626,945 L1641,931" stroke="#ff1010" stroke-width="1.3"/><circle cx="1628.5" cy="933.5" r="1.8" fill="#6ea0f0"/><circle cx="1638.5" cy="942.5" r="1.8" fill="#6ea0f0"/><circle cx="1628.5" cy="942.5" r="1.8" fill="#6ea0f0"/>
</svg></body></html>
